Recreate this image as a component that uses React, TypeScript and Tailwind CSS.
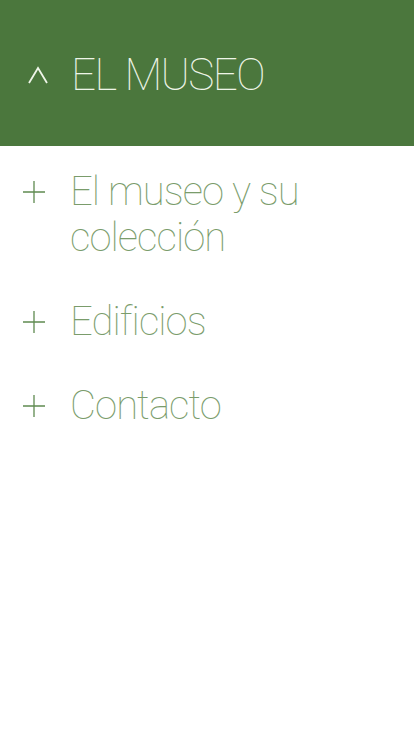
import React from "react";

const items = [
  { label: "El museo y su colección" },
  { label: "Edificios" },
  { label: "Contacto" },
];

function Caret() {
  return (
    <svg width="22" height="18" viewBox="0 0 22 18" fill="none" className="shrink-0">
      <path d="M2 17 L11 2 L20 17" stroke="#eef5e8" strokeWidth="1.8" />
    </svg>
  );
}

function Plus() {
  return (
    <svg width="22" height="22" viewBox="0 0 22 22" fill="none" className="shrink-0">
      <path d="M0 11 H22 M11 0 V22" stroke="#5f8a50" strokeWidth="1.3" />
    </svg>
  );
}

export default function App() {
  return (
    <div
      className="min-h-[736px] w-[414px] bg-white"
      style={{ fontFamily: "Roboto, 'Liberation Sans', sans-serif" }}
    >
      <div className="flex h-[146px] items-center bg-[#4b773d] pl-[27px] pt-[4px]">
        <Caret />
        <span className="ml-[22px] text-[44px] font-thin leading-none tracking-[-1.6px] text-[#eef5e8]">
          EL MUSEO
        </span>
      </div>
      <ul className="pt-[23px]">
        {items.map((it) => (
          <li key={it.label} className="flex items-start pl-[23px] pr-6 pb-[38px]">
            <div className="mt-[12px]">
              <Plus />
            </div>
            <span className="ml-[25px] text-[40px] font-thin leading-[46px] tracking-[-0.9px] text-[#7a9c6b]">
              {it.label}
            </span>
          </li>
        ))}
      </ul>
    </div>
  );
}
